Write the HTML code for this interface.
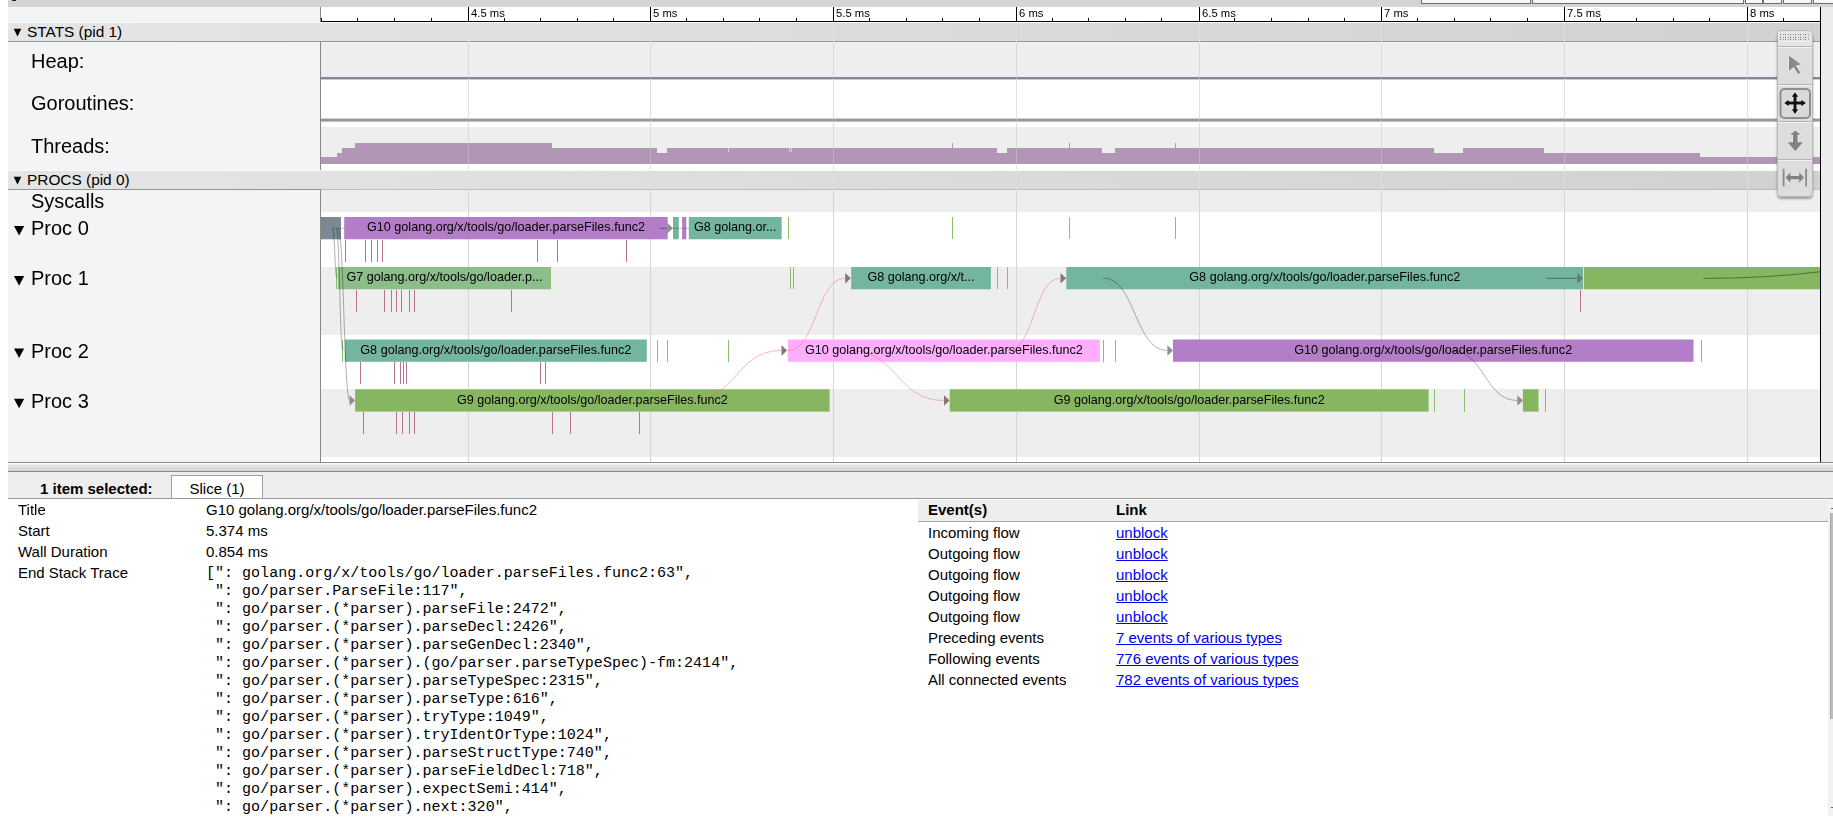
<!DOCTYPE html>
<html><head><meta charset="utf-8">
<style>
html,body{margin:0;padding:0;}
body{width:1833px;height:829px;overflow:hidden;position:relative;background:#fff;font-family:"Liberation Sans",sans-serif;color:#000;}
.abs{position:absolute;}
#topbar{left:8px;top:0;width:1825px;height:7px;background:#d4d4d4;}
.tb{position:absolute;top:-10px;height:12px;border:1px solid #6e6e6e;background:#f8f8f8;box-sizing:content-box;}
#labcol{left:8px;top:7px;width:312px;height:455px;background:#f3f4f6;}
#labborder1{left:320px;top:7px;width:1px;height:15px;background:#888;}
#labborder2{left:320px;top:42px;width:1px;height:128px;background:#888;}
#labborder3{left:320px;top:190px;width:1px;height:272px;background:#888;}
.hdr{position:absolute;left:8px;width:1812px;height:18px;background:linear-gradient(to right,#e5e5e5,#d1d1d1);border-bottom:1px solid #959595;font-size:15.4px;line-height:18px;}
.hdr .tri{position:absolute;left:6px;top:0;font-size:11px;}
.hdr .t{position:absolute;left:19px;top:0;}
.wl{position:absolute;left:8px;width:1812px;height:1px;background:#fafafa;}
.lab{position:absolute;font-size:20px;line-height:22px;white-space:nowrap;}
.ltri{position:absolute;font-size:13px;left:13px;}
#rstrip{left:1821px;top:7px;width:12px;height:455px;background:#ececec;}
#rline{left:1820px;top:7px;width:1px;height:455px;background:#000;}
svg text{font-family:"Liberation Sans",sans-serif;font-size:12.6px;fill:#000;}
svg text.rl{font-size:11.25px;}
#drag{left:8px;top:462px;width:1825px;height:9px;background:linear-gradient(#fbfbfb 0,#fbfbfb 1px,#e4e4e4 2px,#d2d2d2);border-top:1px solid #8a8a8a;border-bottom:1px solid #8a8a8a;box-sizing:border-box;height:10px;}
#ahdr{left:8px;top:472px;width:1825px;height:26px;background:#eeeeee;border-bottom:1px solid #9a9a9a;}
#sel{left:40px;top:479px;font-size:15px;font-weight:bold;line-height:20px;}
#tab{left:171px;top:475px;width:90px;height:23px;border:1px solid #a0a0a0;border-bottom:none;background:#fff;font-size:15px;line-height:25px;text-align:center;}
.dr{position:absolute;font-size:15px;line-height:21px;white-space:nowrap;}
#stack{left:206px;top:564px;margin:0;font-family:"Liberation Mono",monospace;font-size:15.04px;line-height:18px;white-space:pre;}
#evhdr{left:918px;top:500px;width:910px;height:21px;background:#eeeeee;border-bottom:1px solid #a8a8a8;font-size:15px;font-weight:bold;}
.er{position:absolute;left:928px;font-size:15px;line-height:21px;white-space:nowrap;}
.e2{position:absolute;left:188px;color:#0000ee;text-decoration:underline;}
#sb{left:1828px;top:499px;width:5px;height:317px;background:#f1f1f1;}
#sbth{left:1830px;top:513px;width:2px;height:206px;background:#bdbdbd;border-left:1px solid #a5a5a5;}
/* palette */
#pal{left:1777px;top:30px;width:35px;height:167px;background:#dedede;border:1px solid #c2c2c2;border-radius:4px;box-sizing:border-box;box-shadow:0 1px 2px rgba(0,0,0,0.2);}
</style></head><body>
<div id="topbar" class="abs">
 <div style="position:absolute;left:4px;top:0;width:4px;height:1px;background:#222"></div>
 <div class="tb" style="left:1413px;width:108px"></div>
 <div class="tb" style="left:1524px;width:210px"></div>
 <div class="tb" style="left:1737px;width:16px"></div>
 <div class="tb" style="left:1755px;width:17px"></div>
 <div class="tb" style="left:1775px;width:27px"></div>
 <div class="tb" style="left:1805px;width:30px"></div>
</div>
<div id="labcol" class="abs"></div>
<div id="rstrip" class="abs"></div>
<svg class="abs" style="left:0;top:0" width="1833" height="829" viewBox="0 0 1833 829" shape-rendering="crispEdges">
<rect x="321" y="7" width="1499" height="14" fill="#fff" />
<rect x="321" y="42" width="1499" height="35" fill="#eeeeee" />
<rect x="321" y="127" width="1499" height="37" fill="#eeeeee" />
<rect x="321" y="190" width="1499" height="22" fill="#eeeeee" />
<rect x="321" y="267" width="1499" height="68" fill="#eeeeee" />
<rect x="321" y="389" width="1499" height="68" fill="#eeeeee" />
<rect x="321" y="77" width="1499" height="2" fill="#7d8898" />
<rect x="321" y="79" width="1499" height="1" fill="#c5ccd4" />
<rect x="321" y="118" width="1499" height="1" fill="#d3cfd5" />
<rect x="321" y="119" width="1499" height="2" fill="#9a949c" />
<rect x="321" y="121" width="1499" height="1" fill="#c4c0c6" />
<rect x="321" y="157" width="16" height="7" fill="#b197b5" />
<rect x="337" y="153" width="5" height="11" fill="#b197b5" />
<rect x="342" y="148" width="13" height="16" fill="#b197b5" />
<rect x="355" y="143" width="197" height="21" fill="#b197b5" />
<rect x="552" y="148" width="105" height="16" fill="#b197b5" />
<rect x="657" y="153" width="10" height="11" fill="#b197b5" />
<rect x="667" y="148" width="330" height="16" fill="#b197b5" />
<rect x="997" y="153" width="10" height="11" fill="#b197b5" />
<rect x="1007" y="148" width="95" height="16" fill="#b197b5" />
<rect x="1102" y="153" width="13" height="11" fill="#b197b5" />
<rect x="1115" y="148" width="319" height="16" fill="#b197b5" />
<rect x="1434" y="153" width="29" height="11" fill="#b197b5" />
<rect x="1463" y="148" width="81" height="16" fill="#b197b5" />
<rect x="1544" y="153" width="156" height="11" fill="#b197b5" />
<rect x="1700" y="157" width="120" height="7" fill="#b197b5" />
<rect x="952" y="143" width="1" height="5" fill="#b197b5" />
<rect x="1069" y="143" width="1" height="5" fill="#b197b5" />
<rect x="1175" y="143" width="1" height="5" fill="#b197b5" />
<rect x="728" y="148" width="1" height="4" fill="#d9cfda" />
<rect x="789" y="148" width="1" height="4" fill="#d9cfda" />
<rect x="791" y="148" width="1" height="4" fill="#d9cfda" />
<rect x="468" y="42" width="1" height="128" fill="rgba(200,200,200,0.55)"/>
<rect x="468" y="190" width="1" height="272" fill="#d6d6d6"/>
<rect x="650" y="42" width="1" height="128" fill="rgba(200,200,200,0.55)"/>
<rect x="650" y="190" width="1" height="272" fill="#d6d6d6"/>
<rect x="833" y="42" width="1" height="128" fill="rgba(200,200,200,0.55)"/>
<rect x="833" y="190" width="1" height="272" fill="#d6d6d6"/>
<rect x="1016" y="42" width="1" height="128" fill="rgba(200,200,200,0.55)"/>
<rect x="1016" y="190" width="1" height="272" fill="#d6d6d6"/>
<rect x="1199" y="42" width="1" height="128" fill="rgba(200,200,200,0.55)"/>
<rect x="1199" y="190" width="1" height="272" fill="#d6d6d6"/>
<rect x="1381" y="42" width="1" height="128" fill="rgba(200,200,200,0.55)"/>
<rect x="1381" y="190" width="1" height="272" fill="#d6d6d6"/>
<rect x="1564" y="42" width="1" height="128" fill="rgba(200,200,200,0.55)"/>
<rect x="1564" y="190" width="1" height="272" fill="#d6d6d6"/>
<rect x="1747" y="42" width="1" height="128" fill="rgba(200,200,200,0.55)"/>
<rect x="1747" y="190" width="1" height="272" fill="#d6d6d6"/>
<g shape-rendering="auto">
<rect x="321" y="217.0" width="20" height="22.3" fill="#7a8a94" />
<rect x="344.2" y="217.0" width="323.5" height="22.3" fill="#b47dc7" />
<rect x="673" y="217.0" width="5.8" height="22.3" fill="#74b5a0" />
<rect x="682.1" y="217.0" width="4.2" height="22.3" fill="#b47dc7" />
<rect x="688.8" y="217.0" width="92.9" height="22.3" fill="#74b5a0" />
<rect x="337.8" y="267.0" width="213.2" height="22.3" fill="#8dbd8b" />
<rect x="851.2" y="267.0" width="139.7" height="22.3" fill="#74b5a0" />
<rect x="1066.3" y="267.0" width="516.9" height="22.3" fill="#74b5a0" />
<rect x="1584" y="267.0" width="236" height="22.3" fill="#86b760" />
<rect x="344.8" y="339.5" width="302.0" height="22.3" fill="#74b5a0" />
<rect x="787.8" y="339.5" width="312.1" height="22.3" fill="#feaefe" />
<rect x="1173" y="339.5" width="520.5" height="22.3" fill="#b47dc7" />
<rect x="355.1" y="389.3" width="474.5" height="22.3" fill="#86b760" />
<rect x="949.7" y="389.3" width="478.9" height="22.3" fill="#86b760" />
<rect x="1522.9" y="389.3" width="15.6" height="22.3" fill="#86b760" />
</g>
<rect x="788" y="217.0" width="1" height="22.3" fill="#8bbf6e" />
<rect x="952" y="217.0" width="1" height="22.3" fill="#8bbf6e" />
<rect x="1069" y="217.0" width="1" height="22.3" fill="#8bbf6e" />
<rect x="1175" y="217.0" width="1" height="22.3" fill="#8bbf6e" />
<rect x="336" y="267.0" width="1" height="22.3" fill="#8bbf6e" />
<rect x="550" y="267.0" width="1" height="22.3" fill="#8bbf6e" />
<rect x="790" y="267.0" width="1" height="22.3" fill="#8bbf6e" />
<rect x="793" y="267.0" width="1" height="22.3" fill="#8bbf6e" />
<rect x="997" y="267.0" width="1" height="22.3" fill="#8bbf6e" />
<rect x="1007" y="267.0" width="1" height="22.3" fill="#8bbf6e" />
<rect x="342" y="339.5" width="1" height="22.3" fill="#8bbf6e" />
<rect x="657" y="339.5" width="1" height="22.3" fill="#8bbf6e" />
<rect x="667" y="339.5" width="1" height="22.3" fill="#8bbf6e" />
<rect x="728" y="339.5" width="1" height="22.3" fill="#8bbf6e" />
<rect x="1103" y="339.5" width="1" height="22.3" fill="#8bbf6e" />
<rect x="1115" y="339.5" width="1" height="22.3" fill="#8bbf6e" />
<rect x="1701" y="339.5" width="1" height="22.3" fill="#8bbf6e" />
<rect x="1434" y="389.3" width="1" height="22.3" fill="#8bbf6e" />
<rect x="1464" y="389.3" width="1" height="22.3" fill="#8bbf6e" />
<rect x="1545" y="389.3" width="1" height="22.3" fill="#8bbf6e" />
<rect x="345" y="240" width="1" height="22" fill="#b57590" />
<rect x="365" y="240" width="1" height="22" fill="#b57590" />
<rect x="371" y="240" width="1" height="22" fill="#b57590" />
<rect x="377" y="240" width="1" height="22" fill="#b57590" />
<rect x="382" y="240" width="1" height="22" fill="#b57590" />
<rect x="537" y="240" width="1" height="22" fill="#b57590" />
<rect x="557" y="240" width="1" height="22" fill="#b57590" />
<rect x="626" y="240" width="1" height="22" fill="#b57590" />
<rect x="356" y="290" width="1" height="22" fill="#b57590" />
<rect x="384" y="290" width="1" height="22" fill="#b57590" />
<rect x="391" y="290" width="1" height="22" fill="#b57590" />
<rect x="396" y="290" width="1" height="22" fill="#b57590" />
<rect x="401" y="290" width="1" height="22" fill="#b57590" />
<rect x="409" y="290" width="1" height="22" fill="#b57590" />
<rect x="414" y="290" width="1" height="22" fill="#b57590" />
<rect x="511" y="290" width="1" height="22" fill="#b57590" />
<rect x="1580" y="290" width="1" height="22" fill="#b57590" />
<rect x="360" y="362" width="1" height="22" fill="#b57590" />
<rect x="394" y="362" width="1" height="22" fill="#b57590" />
<rect x="400" y="362" width="1" height="22" fill="#b57590" />
<rect x="403" y="362" width="1" height="22" fill="#b57590" />
<rect x="406" y="362" width="1" height="22" fill="#b57590" />
<rect x="540" y="362" width="1" height="22" fill="#b57590" />
<rect x="545" y="362" width="1" height="22" fill="#b57590" />
<rect x="363" y="412" width="1" height="22" fill="#b57590" />
<rect x="396" y="412" width="1" height="22" fill="#b57590" />
<rect x="402" y="412" width="1" height="22" fill="#b57590" />
<rect x="409" y="412" width="1" height="22" fill="#b57590" />
<rect x="414" y="412" width="1" height="22" fill="#b57590" />
<rect x="552" y="412" width="1" height="22" fill="#b57590" />
<rect x="570" y="412" width="1" height="22" fill="#b57590" />
<rect x="639" y="412" width="1" height="22" fill="#b57590" />
<g shape-rendering="auto">
<path d="M 332.7 228.3 C 334.79999999999995 228.3, 334.79999999999995 277.7, 336.9 277.7" stroke="rgba(0,0,0,0.3)" stroke-width="1" fill="none"/>
<path d="M 336.3 228.3 C 339.65 228.3, 339.65 350.5, 343 350.5" stroke="rgba(0,0,0,0.3)" stroke-width="1" fill="none"/>
<path d="M 338 228.3 C 343.9 228.3, 343.9 400.5, 349.8 400.5" stroke="rgba(0,0,0,0.3)" stroke-width="1" fill="none"/>
<path d="M 332 228.3 L 345 228.3" stroke="rgba(0,0,0,0.2)" stroke-width="1" fill="none"/>
<path d="M 659.9 228.3 L 667.6 228.3" stroke="rgba(0,0,0,0.4)" stroke-width="1" fill="none"/>
<path d="M 673 228.3 L 689 228.3" stroke="rgba(0,0,0,0.22)" stroke-width="1" fill="none"/>
<path d="M 691.6 399.8 C 736.3 399.8, 736.3 350.5, 781 350.5" stroke="rgba(240,90,90,0.42)" stroke-width="1" fill="none"/>
<path d="M 788 350.5 C 816.5 350.5, 816.5 278.3, 845 278.3" stroke="rgba(240,90,90,0.42)" stroke-width="1" fill="none"/>
<path d="M 850 350.5 C 896.8 350.5, 896.8 400.5, 943.6 400.5" stroke="rgba(240,90,90,0.42)" stroke-width="1" fill="none"/>
<path d="M 1008 350.5 C 1034.0 350.5, 1034.0 278.3, 1060 278.3" stroke="rgba(240,90,90,0.42)" stroke-width="1" fill="none"/>
<path d="M 1103.2 278 C 1135.1 278, 1135.1 350.5, 1167 350.5" stroke="rgba(0,0,0,0.3)" stroke-width="1" fill="none"/>
<path d="M 1452 351 C 1484.6 351, 1484.6 400.5, 1517.2 400.5" stroke="rgba(0,0,0,0.3)" stroke-width="1" fill="none"/>
<path d="M 1546.4 278.3 L 1577.5 278.3" stroke="rgba(0,0,0,0.38)" stroke-width="1" fill="none"/>
<path d="M 1703.5 278.4 Q 1765 278.4, 1820 271.8" stroke="rgba(0,0,0,0.38)" stroke-width="1" fill="none"/>
<path d="M 667.4 223.10000000000002 L 673 228.3 L 667.4 233.5 Z" fill="#8f8f8f"/>
<path d="M 349.5 395.3 L 355.1 400.5 L 349.5 405.7 Z" fill="#8f8f8f"/>
<path d="M 781.5 345.3 L 787.1 350.5 L 781.5 355.7 Z" fill="#8a7474"/>
<path d="M 845.1999999999999 273.1 L 850.8 278.3 L 845.1999999999999 283.5 Z" fill="#8a7474"/>
<path d="M 944.0 395.3 L 949.6 400.5 L 944.0 405.7 Z" fill="#8a7474"/>
<path d="M 1060.5 273.1 L 1066.1 278.3 L 1060.5 283.5 Z" fill="#8a7474"/>
<path d="M 1167.4 345.3 L 1173 350.5 L 1167.4 355.7 Z" fill="#8f8f8f"/>
<path d="M 1517.3000000000002 395.3 L 1522.9 400.5 L 1517.3000000000002 405.7 Z" fill="#8f8f8f"/>
<path d="M 1577.4 273.1 L 1583 278.3 L 1577.4 283.5 Z" fill="#5a7d70"/>
</g>
<rect x="321" y="21" width="1499" height="1" fill="#000" />
<rect x="468" y="7" width="1" height="14" fill="#000"/>
<rect x="650" y="7" width="1" height="14" fill="#000"/>
<rect x="833" y="7" width="1" height="14" fill="#000"/>
<rect x="1016" y="7" width="1" height="14" fill="#000"/>
<rect x="1199" y="7" width="1" height="14" fill="#000"/>
<rect x="1381" y="7" width="1" height="14" fill="#000"/>
<rect x="1564" y="7" width="1" height="14" fill="#000"/>
<rect x="1747" y="7" width="1" height="14" fill="#000"/>
<rect x="321" y="18" width="1" height="3" fill="#000"/>
<rect x="357" y="18" width="1" height="3" fill="#000"/>
<rect x="394" y="18" width="1" height="3" fill="#000"/>
<rect x="431" y="18" width="1" height="3" fill="#000"/>
<rect x="504" y="18" width="1" height="3" fill="#000"/>
<rect x="540" y="18" width="1" height="3" fill="#000"/>
<rect x="577" y="18" width="1" height="3" fill="#000"/>
<rect x="613" y="18" width="1" height="3" fill="#000"/>
<rect x="686" y="18" width="1" height="3" fill="#000"/>
<rect x="723" y="18" width="1" height="3" fill="#000"/>
<rect x="759" y="18" width="1" height="3" fill="#000"/>
<rect x="796" y="18" width="1" height="3" fill="#000"/>
<rect x="869" y="18" width="1" height="3" fill="#000"/>
<rect x="906" y="18" width="1" height="3" fill="#000"/>
<rect x="942" y="18" width="1" height="3" fill="#000"/>
<rect x="979" y="18" width="1" height="3" fill="#000"/>
<rect x="1052" y="18" width="1" height="3" fill="#000"/>
<rect x="1088" y="18" width="1" height="3" fill="#000"/>
<rect x="1125" y="18" width="1" height="3" fill="#000"/>
<rect x="1161" y="18" width="1" height="3" fill="#000"/>
<rect x="1234" y="18" width="1" height="3" fill="#000"/>
<rect x="1271" y="18" width="1" height="3" fill="#000"/>
<rect x="1308" y="18" width="1" height="3" fill="#000"/>
<rect x="1344" y="18" width="1" height="3" fill="#000"/>
<rect x="1417" y="18" width="1" height="3" fill="#000"/>
<rect x="1454" y="18" width="1" height="3" fill="#000"/>
<rect x="1490" y="18" width="1" height="3" fill="#000"/>
<rect x="1527" y="18" width="1" height="3" fill="#000"/>
<rect x="1600" y="18" width="1" height="3" fill="#000"/>
<rect x="1636" y="18" width="1" height="3" fill="#000"/>
<rect x="1673" y="18" width="1" height="3" fill="#000"/>
<rect x="1709" y="18" width="1" height="3" fill="#000"/>
<rect x="1783" y="18" width="1" height="3" fill="#000"/>
<rect x="321" y="18" width="1" height="3" fill="#000"/>
</svg>
<svg class="abs" style="left:0;top:0;will-change:transform" width="1833" height="462" viewBox="0 0 1833 462"><text x="506.0" y="231.2" text-anchor="middle">G10 golang.org/x/tools/go/loader.parseFiles.func2</text>
<text x="735.2" y="231.2" text-anchor="middle">G8 golang.or...</text>
<text x="444.4" y="281.2" text-anchor="middle">G7 golang.org/x/tools/go/loader.p...</text>
<text x="921.0" y="281.2" text-anchor="middle">G8 golang.org/x/t...</text>
<text x="1324.8" y="281.2" text-anchor="middle">G8 golang.org/x/tools/go/loader.parseFiles.func2</text>
<text x="495.8" y="353.7" text-anchor="middle">G8 golang.org/x/tools/go/loader.parseFiles.func2</text>
<text x="943.9" y="353.7" text-anchor="middle">G10 golang.org/x/tools/go/loader.parseFiles.func2</text>
<text x="1433.2" y="353.7" text-anchor="middle">G10 golang.org/x/tools/go/loader.parseFiles.func2</text>
<text x="592.4" y="403.5" text-anchor="middle">G9 golang.org/x/tools/go/loader.parseFiles.func2</text>
<text x="1189.2" y="403.5" text-anchor="middle">G9 golang.org/x/tools/go/loader.parseFiles.func2</text>
<text class="rl" x="471" y="17">4.5 ms</text>
<text class="rl" x="653" y="17">5 ms</text>
<text class="rl" x="836" y="17">5.5 ms</text>
<text class="rl" x="1019" y="17">6 ms</text>
<text class="rl" x="1202" y="17">6.5 ms</text>
<text class="rl" x="1384" y="17">7 ms</text>
<text class="rl" x="1567" y="17">7.5 ms</text>
<text class="rl" x="1750" y="17">8 ms</text></svg>
<div class="wl" style="top:22px"></div>
<div class="hdr" style="top:23px"><span class="t">STATS (pid 1)</span></div>
<div class="wl" style="top:170px"></div>
<div class="hdr" style="top:171px"><span class="t">PROCS (pid 0)</span></div>
<div class="abs" style="left:321px;top:189px;width:1499px;height:1px;background:#bdbdbd"></div>
<div class="abs" style="left:321px;top:42px;width:1499px;height:1px;background:#f3f3f3"></div>
<div class="abs" style="left:468px;top:23px;width:1px;height:20px;background:#dedede"></div><div class="abs" style="left:468px;top:171px;width:1px;height:19px;background:#dedede"></div><div class="abs" style="left:650px;top:23px;width:1px;height:20px;background:#dedede"></div><div class="abs" style="left:650px;top:171px;width:1px;height:19px;background:#dedede"></div><div class="abs" style="left:833px;top:23px;width:1px;height:20px;background:#dedede"></div><div class="abs" style="left:833px;top:171px;width:1px;height:19px;background:#dedede"></div><div class="abs" style="left:1016px;top:23px;width:1px;height:20px;background:#dedede"></div><div class="abs" style="left:1016px;top:171px;width:1px;height:19px;background:#dedede"></div><div class="abs" style="left:1199px;top:23px;width:1px;height:20px;background:#dedede"></div><div class="abs" style="left:1199px;top:171px;width:1px;height:19px;background:#dedede"></div><div class="abs" style="left:1381px;top:23px;width:1px;height:20px;background:#dedede"></div><div class="abs" style="left:1381px;top:171px;width:1px;height:19px;background:#dedede"></div><div class="abs" style="left:1564px;top:23px;width:1px;height:20px;background:#dedede"></div><div class="abs" style="left:1564px;top:171px;width:1px;height:19px;background:#dedede"></div><div class="abs" style="left:1747px;top:23px;width:1px;height:20px;background:#dedede"></div><div class="abs" style="left:1747px;top:171px;width:1px;height:19px;background:#dedede"></div>
<svg class="abs" style="left:0;top:0" width="40" height="420" viewBox="0 0 40 420"><path d="M13.7 28.8 L21.3 28.8 L17.5 36.6 Z" fill="#000"/><path d="M13.7 176.8 L21.3 176.8 L17.5 184.6 Z" fill="#000"/><path d="M14 225.9 L24.2 225.9 L19.1 235.5 Z" fill="#000"/><path d="M14 276.1 L24.2 276.1 L19.1 285.7 Z" fill="#000"/><path d="M14 348.5 L24.2 348.5 L19.1 358.1 Z" fill="#000"/><path d="M14 398.7 L24.2 398.7 L19.1 408.3 Z" fill="#000"/></svg>
<div id="labborder1" class="abs"></div>
<div id="labborder2" class="abs"></div>
<div id="labborder3" class="abs"></div>
<div id="rline" class="abs"></div>
<div class="lab" style="left:31px;top:50px">Heap:</div>
<div class="lab" style="left:31px;top:92px">Goroutines:</div>
<div class="lab" style="left:31px;top:135px">Threads:</div>
<div class="lab" style="left:31px;top:190px">Syscalls</div>
<div class="lab" style="left:31px;top:217px">Proc 0</div>
<div class="lab" style="left:31px;top:267px">Proc 1</div>
<div class="lab" style="left:31px;top:340px">Proc 2</div>
<div class="lab" style="left:31px;top:390px">Proc 3</div>
<svg class="abs" style="left:1770px;top:26px" width="50" height="178" viewBox="1770 26 50 178">
<defs><linearGradient id="pg" x1="0" y1="0" x2="0" y2="1"><stop offset="0" stop-color="#ececec"/><stop offset="1" stop-color="#dcdcdc"/></linearGradient>
<filter id="sh" x="-20%" y="-10%" width="140%" height="130%"><feGaussianBlur in="SourceAlpha" stdDeviation="1.2"/><feOffset dy="1.5"/><feComponentTransfer><feFuncA type="linear" slope="0.35"/></feComponentTransfer><feMerge><feMergeNode/><feMergeNode in="SourceGraphic"/></feMerge></filter></defs>
<g filter="url(#sh)"><rect x="1777.5" y="30.5" width="35" height="166" rx="4" ry="4" fill="#dddddd" stroke="#b9b9b9" stroke-width="1"/></g>
<rect x="1778" y="31" width="34" height="15.5" rx="3.5" fill="#e4e4e4"/>
<g shape-rendering="crispEdges">
<rect x="1778" y="46" width="34" height="1" fill="#b4b4b4"/><rect x="1778" y="47" width="34" height="1" fill="#f2f2f2"/>
<rect x="1778" y="84" width="34" height="1" fill="#b4b4b4"/><rect x="1778" y="85" width="34" height="1" fill="#f2f2f2"/>
<rect x="1778" y="121" width="34" height="1" fill="#b4b4b4"/><rect x="1778" y="122" width="34" height="1" fill="#f2f2f2"/>
<rect x="1778" y="159" width="34" height="1" fill="#b4b4b4"/><rect x="1778" y="160" width="34" height="1" fill="#f2f2f2"/>
<rect x="1780.0" y="34.0" width="1.2" height="1.2" fill="#707070"/><rect x="1782.5" y="34.0" width="1.2" height="1.2" fill="#9a9a9a"/><rect x="1785.0" y="34.0" width="1.2" height="1.2" fill="#707070"/><rect x="1787.5" y="34.0" width="1.2" height="1.2" fill="#9a9a9a"/><rect x="1790.0" y="34.0" width="1.2" height="1.2" fill="#707070"/><rect x="1792.5" y="34.0" width="1.2" height="1.2" fill="#9a9a9a"/><rect x="1795.0" y="34.0" width="1.2" height="1.2" fill="#707070"/><rect x="1797.5" y="34.0" width="1.2" height="1.2" fill="#9a9a9a"/><rect x="1800.0" y="34.0" width="1.2" height="1.2" fill="#707070"/><rect x="1802.5" y="34.0" width="1.2" height="1.2" fill="#9a9a9a"/><rect x="1805.0" y="34.0" width="1.2" height="1.2" fill="#707070"/><rect x="1807.5" y="34.0" width="1.2" height="1.2" fill="#9a9a9a"/><rect x="1780.0" y="36.7" width="1.2" height="1.2" fill="#707070"/><rect x="1782.5" y="36.7" width="1.2" height="1.2" fill="#9a9a9a"/><rect x="1785.0" y="36.7" width="1.2" height="1.2" fill="#707070"/><rect x="1787.5" y="36.7" width="1.2" height="1.2" fill="#9a9a9a"/><rect x="1790.0" y="36.7" width="1.2" height="1.2" fill="#707070"/><rect x="1792.5" y="36.7" width="1.2" height="1.2" fill="#9a9a9a"/><rect x="1795.0" y="36.7" width="1.2" height="1.2" fill="#707070"/><rect x="1797.5" y="36.7" width="1.2" height="1.2" fill="#9a9a9a"/><rect x="1800.0" y="36.7" width="1.2" height="1.2" fill="#707070"/><rect x="1802.5" y="36.7" width="1.2" height="1.2" fill="#9a9a9a"/><rect x="1805.0" y="36.7" width="1.2" height="1.2" fill="#707070"/><rect x="1807.5" y="36.7" width="1.2" height="1.2" fill="#9a9a9a"/><rect x="1780.0" y="39.2" width="1.2" height="1.2" fill="#707070"/><rect x="1782.5" y="39.2" width="1.2" height="1.2" fill="#9a9a9a"/><rect x="1785.0" y="39.2" width="1.2" height="1.2" fill="#707070"/><rect x="1787.5" y="39.2" width="1.2" height="1.2" fill="#9a9a9a"/><rect x="1790.0" y="39.2" width="1.2" height="1.2" fill="#707070"/><rect x="1792.5" y="39.2" width="1.2" height="1.2" fill="#9a9a9a"/><rect x="1795.0" y="39.2" width="1.2" height="1.2" fill="#707070"/><rect x="1797.5" y="39.2" width="1.2" height="1.2" fill="#9a9a9a"/><rect x="1800.0" y="39.2" width="1.2" height="1.2" fill="#707070"/><rect x="1802.5" y="39.2" width="1.2" height="1.2" fill="#9a9a9a"/><rect x="1805.0" y="39.2" width="1.2" height="1.2" fill="#707070"/><rect x="1807.5" y="39.2" width="1.2" height="1.2" fill="#9a9a9a"/><rect x="1780.0" y="41" width="1.2" height="1" fill="#ffffff"/><rect x="1782.5" y="41" width="1.2" height="1" fill="#ffffff"/><rect x="1785.0" y="41" width="1.2" height="1" fill="#ffffff"/><rect x="1787.5" y="41" width="1.2" height="1" fill="#ffffff"/><rect x="1790.0" y="41" width="1.2" height="1" fill="#ffffff"/><rect x="1792.5" y="41" width="1.2" height="1" fill="#ffffff"/><rect x="1795.0" y="41" width="1.2" height="1" fill="#ffffff"/><rect x="1797.5" y="41" width="1.2" height="1" fill="#ffffff"/><rect x="1800.0" y="41" width="1.2" height="1" fill="#ffffff"/><rect x="1802.5" y="41" width="1.2" height="1" fill="#ffffff"/><rect x="1805.0" y="41" width="1.2" height="1" fill="#ffffff"/><rect x="1807.5" y="41" width="1.2" height="1" fill="#ffffff"/></g>
<path d="M1789 55.4 L1801 64.6 L1795.8 65.4 L1800.4 72.6 L1798.3 74.2 L1793.6 67 L1789 71 Z" fill="#8a8a8a" stroke="#f4f4f4" stroke-width="1.2" stroke-opacity="0.8" paint-order="stroke" stroke-linejoin="round"/>
<rect x="1780.5" y="89" width="29.5" height="29" rx="4" ry="4" fill="#d9d9d9" stroke="#8e8e8e" stroke-width="2"/>
<path d="M1795 92.3 L1798.3 96.8 L1796.5 96.8 L1796.5 101.5 L1801.3 101.5 L1801.3 99.7 L1806 103 L1801.3 106.3 L1801.3 104.5 L1796.5 104.5 L1796.5 109.2 L1798.3 109.2 L1795 113.9 L1791.7 109.2 L1793.5 109.2 L1793.5 104.5 L1788.7 104.5 L1788.7 106.3 L1784.2 103 L1788.7 99.7 L1788.7 101.5 L1793.5 101.5 L1793.5 96.8 L1791.7 96.8 Z" fill="#111" stroke="#f4f4f4" stroke-width="1.4" stroke-opacity="0.9" paint-order="stroke" stroke-linejoin="round"/>
<path d="M1795.3 130.6 L1800.6 134.8 L1797.6 134.8 L1797.6 142.3 L1803 142.3 L1795.3 151.3 L1787.6 142.3 L1793 142.3 L1793 134.8 L1790 134.8 Z" fill="#828282" stroke="#f2f2f2" stroke-width="1.2" stroke-opacity="0.8" paint-order="stroke" stroke-linejoin="round"/>
<rect x="1782.7" y="168.7" width="1.8" height="17.8" fill="#8a8a8a"/>
<rect x="1805.2" y="168.7" width="1.8" height="17.8" fill="#8a8a8a"/>
<path d="M1785.6 177.6 L1790.4 172.6 L1790.4 176.1 L1799.2 176.1 L1799.2 172.6 L1804 177.6 L1799.2 182.7 L1799.2 179.2 L1790.4 179.2 L1790.4 182.7 Z" fill="#828282"/>
</svg>
<div id="drag" class="abs"></div>
<div id="ahdr" class="abs"></div>
<div id="sel" class="abs">1 item selected:</div>
<div id="tab" class="abs">Slice (1)</div>
<div class="abs" style="left:8px;top:498px;width:1825px;height:1px;background:#9a9a9a"></div>
<div class="dr" style="left:18px;top:499px">Title</div>
<div class="dr" style="left:18px;top:520px">Start</div>
<div class="dr" style="left:18px;top:541px">Wall Duration</div>
<div class="dr" style="left:18px;top:562px">End Stack Trace</div>
<div class="dr" style="left:206px;top:499px">G10 golang.org/x/tools/go/loader.parseFiles.func2</div>
<div class="dr" style="left:206px;top:520px">5.374 ms</div>
<div class="dr" style="left:206px;top:541px">0.854 ms</div>
<pre id="stack" class="abs">[&quot;: golang.org/x/tools/go/loader.parseFiles.func2:63&quot;,
 &quot;: go/parser.ParseFile:117&quot;,
 &quot;: go/parser.(*parser).parseFile:2472&quot;,
 &quot;: go/parser.(*parser).parseDecl:2426&quot;,
 &quot;: go/parser.(*parser).parseGenDecl:2340&quot;,
 &quot;: go/parser.(*parser).(go/parser.parseTypeSpec)-fm:2414&quot;,
 &quot;: go/parser.(*parser).parseTypeSpec:2315&quot;,
 &quot;: go/parser.(*parser).parseType:616&quot;,
 &quot;: go/parser.(*parser).tryType:1049&quot;,
 &quot;: go/parser.(*parser).tryIdentOrType:1024&quot;,
 &quot;: go/parser.(*parser).parseStructType:740&quot;,
 &quot;: go/parser.(*parser).parseFieldDecl:718&quot;,
 &quot;: go/parser.(*parser).expectSemi:414&quot;,
 &quot;: go/parser.(*parser).next:320&quot;,</pre>
<div id="evhdr" class="abs"><span style="position:absolute;left:10px;top:1px">Event(s)</span><span style="position:absolute;left:198px;top:1px">Link</span></div>
<div class="er" style="top:522px"><span class="e1">Incoming flow</span><a class="e2">unblock</a></div><div class="er" style="top:543px"><span class="e1">Outgoing flow</span><a class="e2">unblock</a></div><div class="er" style="top:564px"><span class="e1">Outgoing flow</span><a class="e2">unblock</a></div><div class="er" style="top:585px"><span class="e1">Outgoing flow</span><a class="e2">unblock</a></div><div class="er" style="top:606px"><span class="e1">Outgoing flow</span><a class="e2">unblock</a></div><div class="er" style="top:627px"><span class="e1">Preceding events</span><a class="e2">7 events of various types</a></div><div class="er" style="top:648px"><span class="e1">Following events</span><a class="e2">776 events of various types</a></div><div class="er" style="top:669px"><span class="e1">All connected events</span><a class="e2">782 events of various types</a></div>
<div id="sb" class="abs"></div>
<div id="sbth" class="abs"></div>
<div class="abs" style="left:1831px;top:508px;width:2px;height:1px;background:#666"></div>
<div class="abs" style="left:1831px;top:807px;width:2px;height:1px;background:#666"></div>
</body></html>
